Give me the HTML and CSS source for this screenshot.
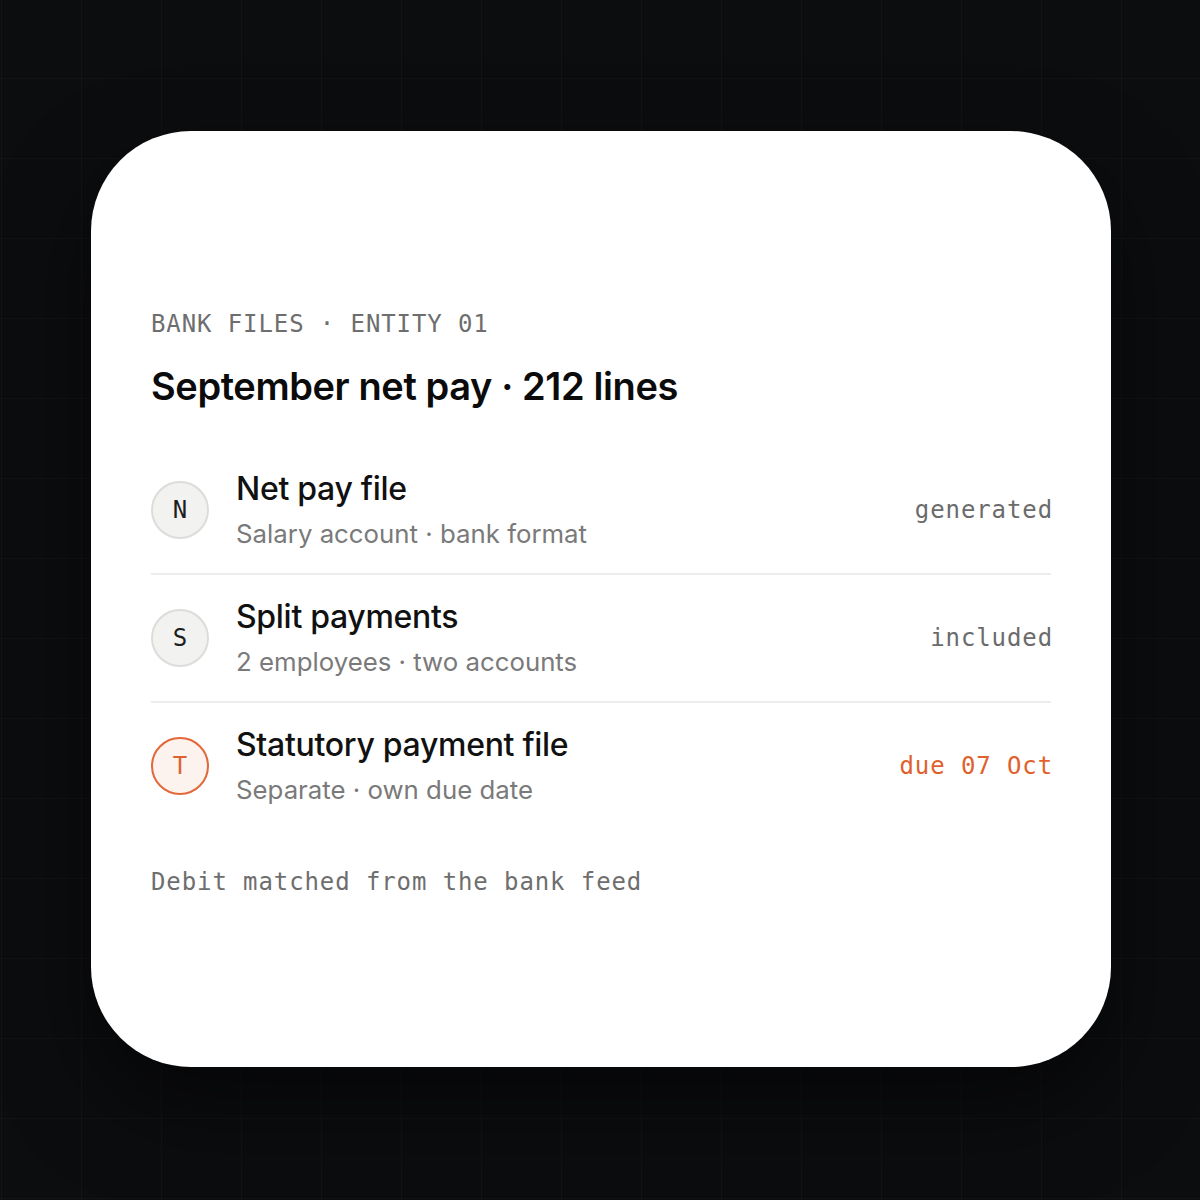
FILE: index.html
```html
<!DOCTYPE html>
<html lang="en">
<head>
<meta charset="utf-8">
<title>Bank files</title>
<link rel="stylesheet" href="styles.css">
</head>
<body>
<main class="stage">
  <section class="card">
    <div class="eyebrow">BANK FILES · ENTITY 01</div>
    <h1 class="title">September net pay · 212 lines</h1>
    <ul class="list">
      <li class="row">
        <span class="avatar">N</span>
        <div class="text">
          <div class="row-title">Net pay file</div>
          <div class="row-sub">Salary account · bank format</div>
        </div>
        <span class="status">generated</span>
      </li>
      <li class="row">
        <span class="avatar">S</span>
        <div class="text">
          <div class="row-title">Split payments</div>
          <div class="row-sub">2 employees · two accounts</div>
        </div>
        <span class="status">included</span>
      </li>
      <li class="row">
        <span class="avatar avatar-accent">T</span>
        <div class="text">
          <div class="row-title">Statutory payment file</div>
          <div class="row-sub">Separate · own due date</div>
        </div>
        <span class="status status-accent">due 07 Oct</span>
      </li>
    </ul>
    <div class="footer">Debit matched from the bank feed</div>
  </section>
</main>
</body>
</html>
```
FILE: styles.css
```css
* { box-sizing: border-box; }
html, body { margin: 0; padding: 0; }
body {
  width: 1200px;
  height: 1200px;
  background-color: #0c0d0f;
  background-image:
    linear-gradient(to right, rgba(255,255,255,0.025) 1px, transparent 1px),
    linear-gradient(to bottom, rgba(255,255,255,0.025) 1px, transparent 1px);
  background-size: 80px 80px;
  background-position: 1px -2px;
  font-family: Inter, "Noto Sans", sans-serif;
}
.stage {
  width: 1200px;
  height: 1200px;
  display: flex;
  align-items: center;
  justify-content: center;
}
.card {
  width: 1020px;
  height: 936px;
  background: #ffffff;
  border-radius: 100px;
  box-shadow: 0 40px 90px rgba(0,0,0,0.55);
  padding: 8px 60px 0;
  display: flex;
  flex-direction: column;
  justify-content: center;
  margin-top: -2px;
  margin-left: 2px;
}
.eyebrow {
  font-family: "DejaVu Sans Mono", monospace;
  font-size: 24px;
  letter-spacing: 0.9px;
  color: #6e6e6e;
  line-height: 30px;
}
.title {
  margin: 24px 0 0;
  font-size: 38px;
  font-weight: 600;
  letter-spacing: -0.4px;
  color: #0b0b0b;
  line-height: 46px;
}
.list {
  list-style: none;
  margin: 38px 0 0;
  padding: 0;
}
.row {
  display: flex;
  align-items: center;
  gap: 27px;
  padding: 22px 0;
  border-bottom: 2px solid #ececec;
}
.row:last-child { border-bottom: none; }
.avatar {
  flex: none;
  width: 58px;
  height: 58px;
  border-radius: 50%;
  border: 2px solid #dcdcda;
  background: #f2f2f0;
  display: flex;
  align-items: center;
  justify-content: center;
  font-family: "DejaVu Sans Mono", monospace;
  font-size: 24px;
  color: #1e1e1e;
}
.avatar-accent {
  border-color: #e2683a;
  background: #fdf3ee;
  color: #dc6232;
}
.text { flex: 1; min-width: 0; }
.row-title {
  font-size: 32px;
  font-weight: 500;
  color: #111111;
  line-height: 40px;
  letter-spacing: -0.3px;
}
.row-sub {
  margin-top: 8px;
  font-size: 25.8px;
  color: #7a7a7a;
  line-height: 34px;
}
.status {
  flex: none;
  margin-right: -2px;
  font-family: "DejaVu Sans Mono", monospace;
  font-size: 24px;
  letter-spacing: 0.9px;
  color: #6b6b6b;
}
.status-accent { color: #e0612d; }
.footer {
  margin-top: 38px;
  font-family: "DejaVu Sans Mono", monospace;
  font-size: 24px;
  letter-spacing: 0.9px;
  color: #6e6e6e;
  line-height: 30px;
}
```
